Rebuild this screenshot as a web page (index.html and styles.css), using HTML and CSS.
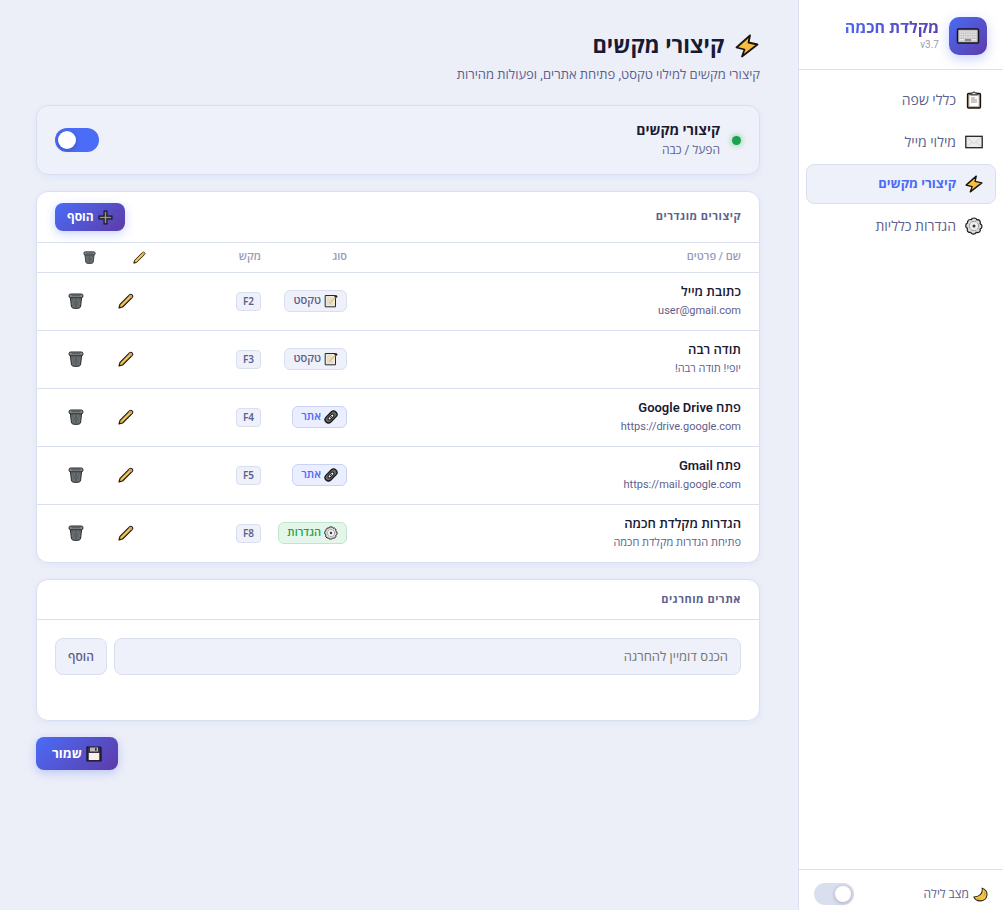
FILE: index.html
```html
<!DOCTYPE html>
<html lang="he" dir="rtl">
<head>
<meta charset="utf-8">
<meta name="viewport" content="width=device-width, initial-scale=1">
<title>מקלדת חכמה</title>
<link rel="stylesheet" href="styles.css">
</head>
<body>
<svg class="sprite" aria-hidden="true">
  <defs>
    <linearGradient id="gold" x1="0" y1="0" x2="1" y2="1"><stop offset="0" stop-color="#ffc83d"/><stop offset="1" stop-color="#f5b04a"/></linearGradient>
  </defs>
  <symbol id="i-keyboard" viewBox="0 0 24 16">
    <rect x="1.500" y="1" width="21" height="14" rx="1" fill="#c4c4c4" stroke="#15131c" stroke-width="1.500"/>
    <path d="M3.500 4h17M3.500 6.500h17M3.500 9h17" stroke="#e9e9e9" stroke-width="1.700" stroke-dasharray="1.500 .7"/>
    <path d="M3.500 11.800h5M15.500 11.800h5" stroke="#e9e9e9" stroke-width="1.500"/>
    <path d="M9 11h6v2.200H9z" fill="#8b8b8b"/>
  </symbol>
  <symbol id="i-clipboard" viewBox="0 0 16 18">
    <rect x="1.500" y="2.500" width="13" height="14.500" rx="1" fill="#a8937f" stroke="#17140f" stroke-width="1.300"/>
    <path d="M3.300 4.500h9.400v10.800H3.300z" fill="#fff"/>
    <path d="M5 3.800V2h2l1-1.400L9 2h2v1.800z" fill="#ddd" stroke="#17140f" stroke-width=".8"/>
    <path d="M5 7h4M5 9h6M5 11h6" stroke="#777" stroke-width=".8"/>
  </symbol>
  <symbol id="i-mail" viewBox="0 0 18 13">
    <rect x=".8" y=".8" width="16.400" height="11.400" fill="#ececec" stroke="#222" stroke-width="1.300"/>
    <path d="M2 2l7 6 7-6M2 11l5-4.500M16 11l-5-4.500" fill="none" stroke="#cacaca" stroke-width=".8"/>
  </symbol>
  <symbol id="i-bolt" viewBox="0 0 24 24">
    <path d="M15 1.500L1.500 13.500l8 2L7 22.500 22.500 10.500l-9-2z" fill="url(#gold)" stroke="#17140f" stroke-width="1.800" stroke-linejoin="round"/>
  </symbol>
  <symbol id="i-gear" viewBox="0 0 18 18">
    <path d="M7 1.500q2-1 4 0l.8 1.300 1.700-.2q1.900 1 1.900 2.800l-.3 1.300 1.400 1q1 1.800-.2 3.600l-1.200.8.200 1.700q-.9 1.900-2.900 1.900l-1.300-.3-1 1.200q-1.900.9-3.600-.1l-.8-1.200-1.800.1q-1.800-.9-1.700-2.900l.2-1.200-1.200-.9q-.9-2 .2-3.700l1.100-.7L2.700 4.300q.9-1.900 2.800-1.800l.9.200z" fill="#dadada" stroke="#1d1d1d" stroke-width="1.200" stroke-linejoin="round"/>
    <circle cx="9" cy="9" r="4.600" fill="#eee" stroke="#777" stroke-width=".9" stroke-dasharray="1.600 .8"/>
    <circle cx="9" cy="9" r="1.500" fill="#333"/>
  </symbol>
  <symbol id="i-plus" viewBox="0 0 14 14">
    <path d="M5.700 1h2.600v4.700H13v2.600H8.300V13H5.700V8.300H1V5.700h4.700z" fill="#98948d" stroke="#15141b" stroke-width="1.100"/>
  </symbol>
  <symbol id="i-pencil" viewBox="0 0 16 16">
    <path d="M1 15l1-3.600L11.700 1.700q1.100-1 2.400.2 1.200 1.300.2 2.400L4.600 14z" fill="#f0b92f" stroke="#1d1710" stroke-width="1.100" stroke-linejoin="round"/>
    <path d="M10.900 2.800l1-.9q.8-.6 1.900.3 1 1 .2 1.900l-1 1z" fill="#d99a82"/>
    <path d="M3.800 12.300l7.800-7.800" stroke="#f9d36f" stroke-width=".8"/>
    <path d="M1 15l.6-2 1.400 1.400z" fill="#1d1710"/>
  </symbol>
  <symbol id="i-trash" viewBox="0 0 16 16">
    <path d="M2.200 3L3.500 14q.4 1.400 4.500 1.400t4.500-1.400L13.800 3z" fill="#6c7274" stroke="#27292b" stroke-width="1"/>
    <path d="M4 6l5 8M7 6l4.500 7.500M12 6l-5 8M9 6l-4.500 7.500M8 6v8.500" stroke="#4f5558" stroke-width=".6"/>
    <rect x="1" y="1" width="14" height="3.800" rx="1.700" fill="#858b8c" stroke="#27292b"/>
    <path d="M3.500 2.700h9" stroke="#596062" stroke-width="1.300"/>
  </symbol>
  <symbol id="i-memo" viewBox="0 0 14 14">
    <path d="M1.200 1.500h10.300v11.300H1.200z" fill="#efe9da" stroke="#28282a" stroke-width="1"/>
    <path d="M3 4h5M3 6h6M3 8h3M3 10h6" stroke="#c9c6c0" stroke-width=".6"/>
    <path d="M5.500 9.500l6-6.500" stroke="#dfc27a" stroke-width="1.500"/>
    <path d="M10 2.600l2.300-1.500 1.400 1.600L12.200 4z" fill="#33261e"/>
  </symbol>
  <symbol id="i-link" viewBox="0 0 14 14">
    <g fill="none" transform="rotate(-45 7 7)">
      <rect x="0" y="3.600" width="14" height="6.800" rx="3.400" fill="#666" stroke="#1a1a1a" stroke-width="1.300"/>
      <rect x="3.500" y="5.500" width="7" height="3" rx="1.500" fill="#fff" stroke="#1a1a1a"/>
      <path d="M5.500 7h2.800" stroke="#333" stroke-width="1.200"/>
    </g>
  </symbol>
  <symbol id="i-floppy" viewBox="0 0 16 16">
    <path d="M1 1h13l1 1v13H1z" fill="#393343" stroke="#15131c" stroke-width="1.200"/>
    <path d="M4 1.500h8v4H4z" fill="#b9bab5"/><path d="M9 2h1.600v2.800H9z" fill="#37323f"/>
    <path d="M2.800 7h10.400v7H2.800z" fill="#faeeee"/>
  </symbol>
  <symbol id="i-moon" viewBox="0 0 16 16">
    <path d="M9.800 1.200q5.700 2.500 5.100 7.600-1 6-7.300 6-4.900 0-6.700-4.100 4.300 0 6.900-2.500 2.700-2.700 2-7z" fill="#f5c842" stroke="#2a210f" stroke-width="1.100" stroke-linejoin="round"/>
    <path d="M12.300 5q.9 2.700-1 5M8 12q-1.500.8-3.500.3" fill="none" stroke="#c78f24" stroke-width=".8"/>
  </symbol>
</svg>

<div class="app">
  <aside class="sidebar">
    <header class="brand">
      <span class="brand-logo"><svg class="icon-keyboard" aria-hidden="true"><use href="#i-keyboard"/></svg></span>
      <div class="brand-text">
        <strong class="brand-name">מקלדת חכמה</strong>
        <span class="brand-version" dir="ltr">v3.7</span>
      </div>
    </header>
    <nav class="nav">
      <a class="nav-item" href="#language"><svg class="icon-nav" aria-hidden="true"><use href="#i-clipboard"/></svg>כללי שפה</a>
      <a class="nav-item" href="#mail"><svg class="icon-nav" aria-hidden="true"><use href="#i-mail"/></svg>מילוי מייל</a>
      <a class="nav-item nav-item-active" href="#shortcuts" aria-current="page"><svg class="icon-nav" aria-hidden="true"><use href="#i-bolt"/></svg>קיצורי מקשים</a>
      <a class="nav-item" href="#general"><svg class="icon-nav" aria-hidden="true"><use href="#i-gear"/></svg>הגדרות כלליות</a>
    </nav>
    <footer class="night">
      <label class="night-label" for="night"><svg class="icon-small" aria-hidden="true"><use href="#i-moon"/></svg>מצב לילה</label>
      <input class="switch switch-small" id="night" type="checkbox">
    </footer>
  </aside>

  <main class="main">
    <header class="page-header">
      <h1 class="page-title"><svg class="icon-title" aria-hidden="true"><use href="#i-bolt"/></svg>קיצורי מקשים</h1>
      <p class="page-subtitle">קיצורי מקשים למילוי טקסט, פתיחת אתרים, ופעולות מהירות</p>
    </header>

    <section class="card status">
      <span class="status-dot"></span>
      <label class="status-text" for="enabled">
        <span class="status-title">קיצורי מקשים</span>
        <span class="status-sub">הפעל / כבה</span>
      </label>
      <input class="switch" id="enabled" type="checkbox" checked>
    </section>

    <section class="card">
      <div class="card-head card-head-tall">
        <h2 class="card-title">קיצורים מוגדרים</h2>
        <button class="btn btn-primary btn-add" type="button"><svg class="icon-small" aria-hidden="true"><use href="#i-plus"/></svg>הוסף</button>
      </div>
      <table class="table">
        <thead>
          <tr>
            <th>שם / פרטים</th>
            <th class="col-type">סוג</th>
            <th class="col-key">מקש</th>
            <th class="col-edit" aria-label="עריכה"><svg class="icon-head" aria-hidden="true"><use href="#i-pencil"/></svg></th>
            <th class="col-delete" aria-label="מחיקה"><svg class="icon-head" aria-hidden="true"><use href="#i-trash"/></svg></th>
          </tr>
        </thead>
        <tbody>
          <tr>
            <td><div class="name">כתובת מייל</div><div class="detail">user@gmail.com</div></td>
            <td><span class="tag"><svg class="icon-tag" aria-hidden="true"><use href="#i-memo"/></svg>טקסט</span></td>
            <td><kbd class="key">F2</kbd></td>
            <td><button class="icon-btn" type="button" aria-label="עריכה"><svg class="icon-row" aria-hidden="true"><use href="#i-pencil"/></svg></button></td>
            <td><button class="icon-btn" type="button" aria-label="מחיקה"><svg class="icon-row" aria-hidden="true"><use href="#i-trash"/></svg></button></td>
          </tr>
          <tr>
            <td><div class="name">תודה רבה</div><div class="detail">יופי! תודה רבה!</div></td>
            <td><span class="tag"><svg class="icon-tag" aria-hidden="true"><use href="#i-memo"/></svg>טקסט</span></td>
            <td><kbd class="key">F3</kbd></td>
            <td><button class="icon-btn" type="button" aria-label="עריכה"><svg class="icon-row" aria-hidden="true"><use href="#i-pencil"/></svg></button></td>
            <td><button class="icon-btn" type="button" aria-label="מחיקה"><svg class="icon-row" aria-hidden="true"><use href="#i-trash"/></svg></button></td>
          </tr>
          <tr>
            <td><div class="name">פתח Google Drive</div><div class="detail">https://drive.google.com</div></td>
            <td><span class="tag tag-site"><svg class="icon-tag" aria-hidden="true"><use href="#i-link"/></svg>אתר</span></td>
            <td><kbd class="key">F4</kbd></td>
            <td><button class="icon-btn" type="button" aria-label="עריכה"><svg class="icon-row" aria-hidden="true"><use href="#i-pencil"/></svg></button></td>
            <td><button class="icon-btn" type="button" aria-label="מחיקה"><svg class="icon-row" aria-hidden="true"><use href="#i-trash"/></svg></button></td>
          </tr>
          <tr>
            <td><div class="name">פתח Gmail</div><div class="detail">https://mail.google.com</div></td>
            <td><span class="tag tag-site"><svg class="icon-tag" aria-hidden="true"><use href="#i-link"/></svg>אתר</span></td>
            <td><kbd class="key">F5</kbd></td>
            <td><button class="icon-btn" type="button" aria-label="עריכה"><svg class="icon-row" aria-hidden="true"><use href="#i-pencil"/></svg></button></td>
            <td><button class="icon-btn" type="button" aria-label="מחיקה"><svg class="icon-row" aria-hidden="true"><use href="#i-trash"/></svg></button></td>
          </tr>
          <tr>
            <td><div class="name">הגדרות מקלדת חכמה</div><div class="detail">פתיחת הגדרות מקלדת חכמה</div></td>
            <td><span class="tag tag-settings"><svg class="icon-tag" aria-hidden="true"><use href="#i-gear"/></svg>הגדרות</span></td>
            <td><kbd class="key">F8</kbd></td>
            <td><button class="icon-btn" type="button" aria-label="עריכה"><svg class="icon-row" aria-hidden="true"><use href="#i-pencil"/></svg></button></td>
            <td><button class="icon-btn" type="button" aria-label="מחיקה"><svg class="icon-row" aria-hidden="true"><use href="#i-trash"/></svg></button></td>
          </tr>
        </tbody>
      </table>
    </section>

    <section class="card">
      <div class="card-head">
        <h2 class="card-title">אתרים מוחרגים</h2>
      </div>
      <form class="exclude">
        <input class="field" type="text" placeholder="הכנס דומיין להחרגה" aria-label="הכנס דומיין להחרגה">
        <button class="btn btn-plain" type="button">הוסף</button>
      </form>
    </section>

    <div class="actions">
      <button class="btn btn-primary btn-save" type="button"><svg class="icon-save" aria-hidden="true"><use href="#i-floppy"/></svg>שמור</button>
    </div>
  </main>
</div>
</body>
</html>
```
FILE: styles.css
```css
:root {
  --accent: #4a6cf7;
  --ink: #1a1a35;
  --muted: #5d5f8d;
  --faint: #979bb9;
  --line: #dadff0;
  --soft: #eef1f9;
  --gradient: linear-gradient(135deg, #4a6cf7, #5e3ba8);
}

* { box-sizing: border-box; }

body {
  margin: 0;
  background: #eceff8;
  color: var(--ink);
  font: 13px/20px Roboto, "Open Sans", sans-serif;
}

button, input { font: inherit; }
h1, h2, p { margin: 0; }
.sprite { position: absolute; width: 0; height: 0; }

.app { display: flex; min-height: 100vh; }

.sidebar {
  display: flex;
  flex-direction: column;
  flex: 0 0 205px;
  background: #fff;
  border-left: 1px solid var(--line);
}

.brand {
  display: flex;
  align-items: center;
  gap: 10px;
  padding: 17px 16px 14px;
  border-bottom: 1px solid var(--line);
}
.brand-logo {
  display: grid;
  place-items: center;
  width: 38px;
  height: 38px;
  border-radius: 10px;
  background: var(--gradient);
  box-shadow: 0 4px 12px rgba(74, 108, 247, .3);
}
.icon-keyboard { width: 24px; height: 16px; }
.brand-text { display: flex; flex-direction: column; align-items: flex-start; padding-bottom: 4px; }
.brand-name {
  font-size: 16px;
  line-height: 22px;
  background: var(--gradient);
  background-clip: text;
  -webkit-background-clip: text;
  color: transparent;
}
.brand-version { font-size: 10px; line-height: 12px; color: var(--faint); }

.nav {
  display: flex;
  flex-direction: column;
  flex: 1;
  gap: 2px;
  padding: 10px 7px;
}
.nav-item {
  display: flex;
  align-items: center;
  gap: 9px;
  height: 40px;
  padding: 0 12px;
  border: 1px solid transparent;
  border-radius: 8px;
  color: var(--muted);
  font-size: 14px;
  text-decoration: none;
}
.nav-item-active {
  background: var(--soft);
  border-color: var(--line);
  color: var(--accent);
  font-size: 13px;
  font-weight: 700;
}
.icon-nav { width: 18px; height: 18px; }

.night {
  display: flex;
  align-items: center;
  justify-content: space-between;
  height: 41px;
  padding: 8px 15px 0;
  border-top: 1px solid var(--line);
}
.night-label { display: flex; align-items: center; gap: 4px; font-size: 12px; color: var(--muted); }
.icon-small { width: 15px; height: 15px; }

.switch {
  appearance: none;
  display: flex;
  align-items: center;
  width: 44px;
  height: 24px;
  margin: 0;
  padding: 0 3px;
  border-radius: 12px;
  background: #dadff0;
}
.switch::before {
  content: "";
  width: 18px;
  height: 18px;
  border-radius: 50%;
  background: #fff;
  box-shadow: 0 1px 4px rgba(0, 0, 0, .25);
}
.switch:checked { background: var(--accent); justify-content: flex-end; }
.switch-small { width: 40px; height: 22px; }
.switch-small::before { width: 16px; height: 16px; }

.main {
  display: flex;
  flex-direction: column;
  flex: 1;
  min-width: 0;
  gap: 16px;
  padding: 28px 38px 28px 36px;
}
.page-header { padding-bottom: 4px; }
.page-title {
  display: flex;
  align-items: center;
  gap: 10px;
  font-size: 22px;
  line-height: 36px;
}
.icon-title { width: 26px; height: 24px; }
.page-subtitle { padding-top: 1px; color: var(--muted); font-size: 13px; }

.card {
  background: #fff;
  border: 1px solid var(--line);
  border-radius: 12px;
  box-shadow: 0 2px 6px rgba(74, 108, 247, .07);
}
.status {
  display: flex;
  align-items: center;
  gap: 12px;
  padding: 14px 18px;
  background: var(--soft);
}
.status-dot {
  width: 9px;
  height: 9px;
  border-radius: 50%;
  background: #1ba34c;
  box-shadow: 0 0 6px rgba(27, 163, 76, .6);
}
.status-text { flex: 1; display: flex; flex-direction: column; }
.status-title { font-size: 14px; font-weight: 700; }
.status-sub { font-size: 12px; color: var(--muted); }

.card-head {
  display: flex;
  align-items: center;
  justify-content: space-between;
  min-height: 40px;
  padding: 0 18px;
  border-bottom: 1px solid var(--line);
}
.card-head-tall { min-height: 51px; }
.card-title { font-size: 11px; line-height: 20px; font-weight: 700; color: var(--muted); letter-spacing: 0.5px; }

.btn {
  display: flex;
  align-items: center;
  justify-content: center;
  gap: 4px;
  border: 0;
  border-radius: 8px;
  cursor: pointer;
}
.btn-primary {
  background: var(--gradient);
  color: #fff;
  font-weight: 700;
  box-shadow: 0 3px 10px rgba(74, 108, 247, .3);
}
.btn-add { height: 28px; padding: 0 12px; font-size: 12px; }
.btn-save { height: 33px; padding: 0 16px; }
.icon-save { width: 16px; height: 16px; }

.table { width: 100%; border-collapse: collapse; table-layout: fixed; }
.table th {
  height: 29px;
  padding: 0 18px;
  color: var(--faint);
  font-size: 11px;
  font-weight: 600;
  line-height: 16px;
  text-align: right;
}
.table td { height: 58px; padding: 0 18px; }
.table tr { border-bottom: 1px solid var(--line); }
.table tbody tr:last-child { border-bottom: 0; }
.table .col-type { width: 86px; }
.table .col-key { width: 115px; }
.table .col-edit { width: 50px; }
.table .col-delete { width: 77px; }
.icon-head { display: block; width: 13px; height: 13px; }
.table td:nth-child(2) { white-space: nowrap; }
.name { font-weight: 600; line-height: 20px; }
.detail { font-size: 11px; line-height: 18px; color: var(--muted); }

.tag {
  display: inline-flex;
  align-items: center;
  gap: 3px;
  height: 22px;
  padding: 0 8px;
  border: 1px solid var(--line);
  border-radius: 6px;
  background: var(--soft);
  color: var(--muted);
  font-size: 11px;
  font-weight: 600;
  vertical-align: middle;
}
.tag-site { background: #eaeeff; border-color: #c9d2f5; color: var(--accent); }
.tag-settings { background: #e4f6ea; border-color: #bfe6cc; color: #1ba34c; }
.icon-tag { width: 14px; height: 14px; }

.key {
  display: inline-block;
  padding: 0 6px;
  border: 1px solid var(--line);
  border-radius: 4px;
  background: var(--soft);
  color: var(--muted);
  font: 600 10px/17px "Noto Sans", sans-serif;
}
.icon-btn {
  display: grid;
  place-items: center;
  width: 40px;
  height: 28px;
  padding: 0;
  border: 0;
  background: none;
  cursor: pointer;
}
.icon-row { width: 16px; height: 16px; }

.exclude { display: flex; gap: 7px; padding: 18px 18px 45px; }
.field {
  flex: 1;
  min-width: 0;
  height: 37px;
  padding: 0 12px;
  border: 1px solid var(--line);
  border-radius: 8px;
  background: var(--soft);
  color: var(--ink);
}
.field::placeholder { color: #757575; opacity: 1; }
.btn-plain {
  height: 37px;
  padding: 0 12px;
  border: 1px solid var(--line);
  background: var(--soft);
  color: var(--muted);
  font-size: 12px;
  font-weight: 600;
}
.actions { display: flex; justify-content: flex-end; }
```
